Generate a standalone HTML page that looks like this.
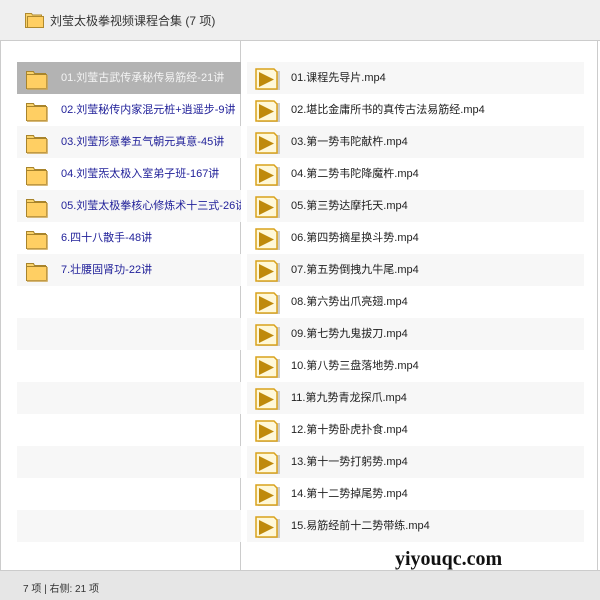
<!DOCTYPE html>
<html><head><meta charset="utf-8"><style>
*{margin:0;padding:0;box-sizing:border-box}
body{width:600px;height:600px;overflow:hidden;background:#fff;font-family:"Liberation Sans","Noto Sans CJK SC",sans-serif;font-size:11px;position:relative}
.hdr{position:absolute;left:0;top:0;width:600px;height:41px;background:#efefef;border-bottom:1px solid #ccc}
.hdr span{position:absolute;left:50px;top:12px;color:#333;font-size:12px}
.lp{position:absolute;left:0;top:41px;width:241px;height:529px;border-left:1px solid #ccc;border-right:1px solid #ccc}
.rp{position:absolute;left:241px;top:41px;width:357px;height:529px;border-right:1px solid #ccc}
.row{position:absolute;height:32px;line-height:32px;white-space:nowrap;overflow:hidden}
.lp .row{left:16px;width:224px;color:#22229a}
.rp .row{left:6px;width:337px;color:#222}
.s{background:#f7f7f7}
.sel{background:#b3b3b3!important;color:#f4f4f4!important}
.lp .row span{position:absolute;left:44px}
.rp .row span{position:absolute;left:44px}
.fi{position:absolute;left:8px;top:8px}
.vi{position:absolute;left:8px;top:6px}
.ft{position:absolute;left:0;top:570px;width:600px;height:30px;background:#e6e6e6;border-top:1px solid #ccc;color:#333;font-size:10px}
.ft span{position:absolute;left:23px;top:9px}
.wm{position:absolute;left:395px;top:548px;font-family:"Liberation Serif",serif;font-weight:bold;font-size:20px;color:#111}
</style></head><body>
<div class="hdr"><svg style="position:absolute;left:25px;top:11px" width="20" height="17"><path d="M0.5 2.5h6l1 1.5h9v12.5h-16z" fill="#f9d26a" stroke="#b08a2e"/><rect x="2.5" y="5.5" width="16" height="11" fill="#ffcf63" stroke="#b08a2e"/></svg><span>刘莹太极拳视频课程合集 (7 项)</span></div>
<div class="lp" id="lp"></div>
<div class="rp" id="rp"></div>
<div class="ft"><span>7 项 | 右侧: 21 项</span></div>
<div class="wm">yiyouqc.com</div>
<script>
var L=["01.刘莹古武传承秘传易筋经-21讲","02.刘莹秘传内家混元桩+逍遥步-9讲","03.刘莹形意拳五气朝元真意-45讲","04.刘莹炁太极入室弟子班-167讲","05.刘莹太极拳核心修炼术十三式-26讲","6.四十八散手-48讲","7.壮腰固肾功-22讲"];
var R=["01.课程先导片.mp4","02.堪比金庸所书的真传古法易筋经.mp4","03.第一势韦陀献杵.mp4","04.第二势韦陀降魔杵.mp4","05.第三势达摩托天.mp4","06.第四势摘星换斗势.mp4","07.第五势倒拽九牛尾.mp4","08.第六势出爪亮翅.mp4","09.第七势九鬼拔刀.mp4","10.第八势三盘落地势.mp4","11.第九势青龙探爪.mp4","12.第十势卧虎扑食.mp4","13.第十一势打躬势.mp4","14.第十二势掉尾势.mp4","15.易筋经前十二势带练.mp4"];
var f='<svg class="fi" width="24" height="20"><path d="M1.5 1.5h7l1 2h11v15h-19z" fill="#f9d26a" stroke="#a8842c"/><rect x="1.5" y="4.5" width="20" height="14" fill="#ffcf63" stroke="#a8842c"/><path d="M22 5v14H2" stroke="#c9a14c" stroke-width="1.5" fill="none"/></svg>';
var v='<svg class="vi" width="26" height="22"><rect x="3" y="3" width="22" height="19" fill="#ccc"/><path d="M1 1h18l3 3v17H1z" fill="#fff8d8" stroke="#d9a21c" stroke-width="1.5"/><path d="M4 4l15 7.5L4 19z" fill="#bf8a0c"/></svg>';
var h='';for(var i=0;i<16;i++){var t=i<7?'<span>'+L[i]+'</span>'+f:'';h+='<div class="row'+(i%2==0?' s':'')+(i==0?' sel':'')+'" style="top:'+(21+i*32)+'px">'+t+'</div>';}
document.getElementById('lp').innerHTML=h;
h='';for(var i=0;i<15;i++){h+='<div class="row'+(i%2==0?' s':'')+'" style="top:'+(21+i*32)+'px">'+v+'<span>'+R[i]+'</span></div>';}
document.getElementById('rp').innerHTML=h;
</script>
</body></html>
